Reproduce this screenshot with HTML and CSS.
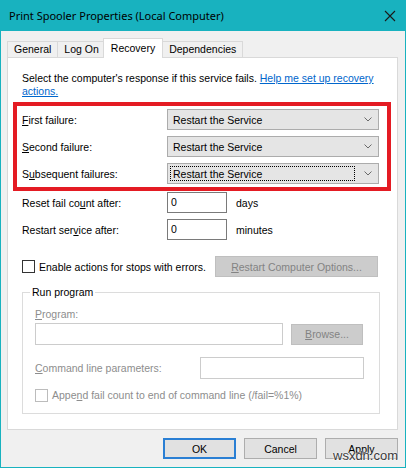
FILE: index.html
```html
<!DOCTYPE html>
<html>
<head>
<meta charset="utf-8">
<link rel="stylesheet" href="styles.css">
</head>
<body>
<div class="window">
  <div class="titlebar">
    <span class="title">Print Spooler Properties (Local Computer)</span>
    <svg class="close" width="12" height="12" viewBox="0 0 12 12"><path d="M1 1 L11 11 M11 1 L1 11" stroke="#1a1a1a" stroke-width="1.1" fill="none"/></svg>
  </div>
  <div class="client">
    <div class="tabs">
      <div class="tab">General</div>
      <div class="tab">Log On</div>
      <div class="tab active">Recovery</div>
      <div class="tab">Dependencies</div>
    </div>
    <div class="panel">
      <p class="desc">Select the computer's response if this service fails. <a class="link">Help me set up recovery<br>actions.</a></p>

      <div class="failures">
        <div class="row">
          <span class="lbl"><u>F</u>irst failure:</span>
          <div class="combo"><span class="combo-text">Restart the Service</span><svg class="chev" width="8" height="5" viewBox="0 0 8 5"><path d="M0.5 0.5 L4 4 L7.5 0.5" stroke="#6a6a6a" stroke-width="1" fill="none"/></svg></div>
        </div>
        <div class="row">
          <span class="lbl"><u>S</u>econd failure:</span>
          <div class="combo"><span class="combo-text">Restart the Service</span><svg class="chev" width="8" height="5" viewBox="0 0 8 5"><path d="M0.5 0.5 L4 4 L7.5 0.5" stroke="#6a6a6a" stroke-width="1" fill="none"/></svg></div>
        </div>
        <div class="row">
          <span class="lbl">S<u>u</u>bsequent failures:</span>
          <div class="combo"><span class="combo-text focused">Restart the Service</span><svg class="chev" width="8" height="5" viewBox="0 0 8 5"><path d="M0.5 0.5 L4 4 L7.5 0.5" stroke="#6a6a6a" stroke-width="1" fill="none"/></svg></div>
        </div>
      </div>

      <div class="resets">
        <div class="row">
          <span class="lbl">Reset fail co<u>u</u>nt after:</span>
          <div class="textbox">0</div>
          <span class="unit">days</span>
        </div>
        <div class="row">
          <span class="lbl">Restart ser<u>v</u>ice after:</span>
          <div class="textbox">0</div>
          <span class="unit">minutes</span>
        </div>
      </div>

      <div class="errors-row">
        <span class="checkbox"></span>
        <span class="check-label">Enable actions for stops with errors.</span>
        <div class="btn disabled wide"><u>R</u>estart Computer Options...</div>
      </div>

      <fieldset class="group">
        <legend class="legend">Run program</legend>
        <div class="dim-label"><u>P</u>rogram:</div>
        <div class="program-row">
          <div class="textbox dis program"></div>
          <div class="btn disabled browse"><u>B</u>rowse...</div>
        </div>
        <div class="cmd-row">
          <span class="dim-label cmd-label"><u>C</u>ommand line parameters:</span>
          <div class="textbox dis cmd"></div>
        </div>
        <div class="append-row">
          <span class="checkbox dis"></span>
          <span class="dim-label">Appe<u>n</u>d fail count to end of command line (/fail=%1%)</span>
        </div>
      </fieldset>

      <div class="annot"></div>
    </div>

    <div class="buttons">
      <div class="btn default">OK</div>
      <div class="btn">Cancel</div>
      <div class="btn">Apply</div>
    </div>
  </div>
  <div class="watermark">wsxdn.com</div>
</div>
</body>
</html>
```
FILE: styles.css
```css
* { box-sizing: border-box; }
html, body { margin: 0; padding: 0; background: #f0f0f0; }
body { font-family: "Liberation Sans", Arial, sans-serif; font-size: 10.5px; color: #000; }

.window {
  position: relative;
  width: 406px;
  height: 468px;
  background: #f0f0f0;
  border: 1px solid #18b2bf;
  border-top: none;
  overflow: hidden;
}

.titlebar {
  height: 31px;
  background: #18b2bf;
  display: flex;
  align-items: center;
  padding-left: 8px;
  padding-right: 9px;
}
.title {
  font-family: "Noto Sans", "Open Sans", sans-serif;
  font-size: 11px;
  color: #000;
  flex: 1;
  padding-bottom: 1px;
}
.close { display: block; }

.client { padding: 0 7px 0 6px; }

.tabs {
  display: flex;
  align-items: flex-end;
  height: 26px;
  padding-top: 7px;
  padding-left: 0;
}
.tab {
  height: 16px;
  line-height: 15px;
  padding: 0 6px;
  border: 1px solid #d9d9d9;
  border-bottom: none;
  background: #f0f0f0;
  margin-right: -1px;
  white-space: nowrap;
}
.tab.active {
  position: relative;
  z-index: 2;
  height: 20px;
  line-height: 18px;
  margin: 0 -1px -1px -2px;
  padding: 0 7px;
  background: #fff;
}

.panel {
  position: relative;
  height: 373px;
  background: #fff;
  border: 1px solid #d9d9d9;
  padding: 14px 18px 0 14px;
}

.desc {
  margin: 0;
  line-height: 13px;
}
.link { color: #0066cc; text-decoration: underline; }

.row {
  display: flex;
  align-items: center;
  height: 21px;
}
.lbl { width: 145px; flex: none; }

.failures {
  margin-top: 11px;
  display: flex;
  flex-direction: column;
  gap: 6px;
}
.combo {
  width: 212px;
  height: 21px;
  background: #e5e5e5;
  border: 1px solid #acacac;
  display: flex;
  align-items: center;
  padding: 0 6px 0 2px;
}
.combo-text {
  flex: 1;
  height: 15px;
  line-height: 14px;
  padding-left: 2px;
  border: 1px dotted transparent;
  margin-right: 9px;
}
.combo-text.focused { border-color: #000; }
.chev { display: block; }

.resets {
  margin-top: 8px;
  display: flex;
  flex-direction: column;
  gap: 6px;
}
.textbox {
  width: 60px;
  height: 21px;
  border: 1px solid #7a7a7a;
  background: #fff;
  padding-left: 3px;
  line-height: 19px;
}
.unit { margin-left: 9px; }

.errors-row {
  margin-top: 16px;
  display: flex;
  align-items: center;
  height: 21px;
}
.checkbox {
  width: 13px;
  height: 13px;
  border: 1px solid #333;
  background: #fff;
  flex: none;
}
.checkbox.dis { border-color: #bcbcbc; }
.check-label { margin-left: 4px; }

.btn {
  height: 21px;
  border: 1px solid #adadad;
  background: #e1e1e1;
  display: flex;
  align-items: center;
  justify-content: center;
  white-space: nowrap;
}
.btn.disabled {
  background: #cccccc;
  border-color: #bfbfbf;
  color: #838383;
}
.btn.wide { width: 163px; margin-left: auto; margin-right: 1px; }

.group {
  margin: 9px 0 0 0;
  padding: 0 15px 11px 12px;
  border: 1px solid #dcdcdc;
  width: 357px;
}
.legend {
  padding: 0 2px;
  margin-left: -5px;
  line-height: 13px;
}
.dim-label { color: #8d8d8d; line-height: 13px; }
.group > .dim-label { margin-top: 9px; }

.program-row {
  display: flex;
  align-items: center;
  margin-top: 2px;
  height: 22px;
}
.textbox.dis { border-color: #cccccc; }
.program { width: 248px; height: 22px; }
.browse { width: 72px; margin-left: 8px; height: 21px; }

.cmd-row {
  display: flex;
  align-items: center;
  margin-top: 12px;
  height: 22px;
}
.cmd-label { width: 165px; flex: none; }
.cmd { width: 164px; height: 22px; }

.append-row {
  display: flex;
  align-items: center;
  margin-top: 10px;
  height: 13px;
}
.append-row .dim-label { margin-left: 4px; }

.annot {
  position: absolute;
  left: 5px;
  top: 44px;
  width: 378px;
  height: 89px;
  border: 4px solid #e41b23;
  pointer-events: none;
}

.buttons {
  display: flex;
  justify-content: flex-end;
  gap: 8px;
  margin-top: 8px;
}
.buttons .btn { width: 73px; }
.btn.default {
  border-color: #2a7fd4;
  box-shadow: inset 0 0 0 1px #2a7fd4;
}

.watermark {
  position: absolute;
  left: 332px;
  top: 448px;
  font-family: "Liberation Sans", Arial, sans-serif;
  font-size: 13px;
  color: #3a3a3a;
  text-shadow: 0 0 2px #fff, 0 0 2px #fff;
}
```
